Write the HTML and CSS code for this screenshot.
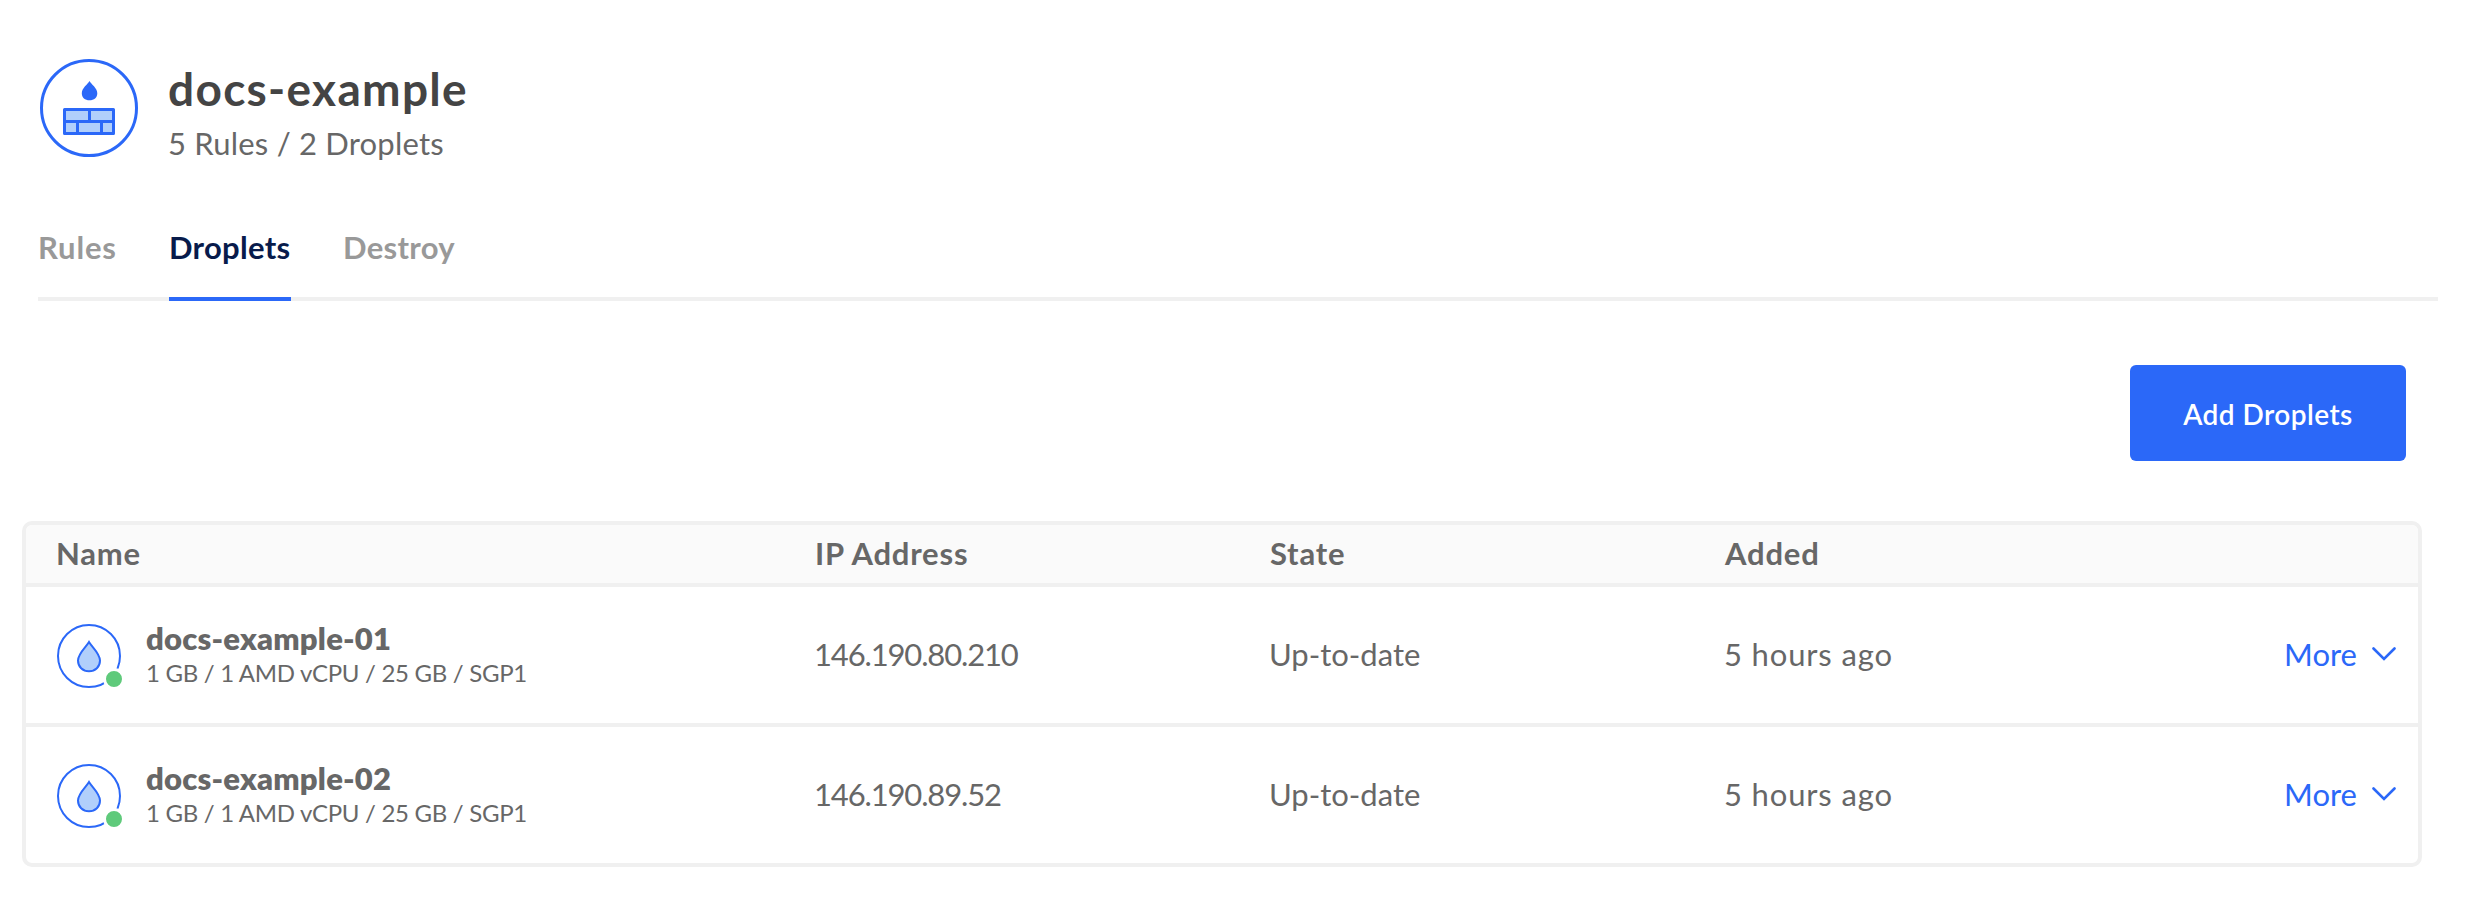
FILE: index.html
```html
<!DOCTYPE html>
<html lang="en">
<head>
<meta charset="utf-8">
<title>docs-example</title>
<link rel="stylesheet" href="styles.css">
</head>
<body>
<header class="header">
  <svg class="header-icon" viewBox="0 0 98 98">
    <circle cx="49" cy="49" r="47.5" fill="#fff" stroke="#2b68f8" stroke-width="3"/>
    <path d="M49.5 22C51.2 25.2 57.3 29 57.3 34.2C57.3 38.6 54 41.2 49.5 41.2C45 41.2 41.8 38.6 41.8 34.2C41.8 29 47.8 25.2 49.5 22Z" fill="#2b68f8"/>
    <path d="M24.5 50.5h49v24h-49zM24.5 62.5h49M49.5 50.5v12M37.5 62.5v12M61.5 62.5v12" fill="#b1cffb" stroke="#2b68f8" stroke-width="3" stroke-linejoin="round"/>
  </svg>
  <div class="header-text">
    <h1 class="title">docs-example</h1>
    <p class="subtitle">5 Rules / 2 Droplets</p>
  </div>
</header>
<nav class="tabs">
  <a class="tab tab-rules">Rules</a>
  <a class="tab tab-droplets active">Droplets</a>
  <a class="tab tab-destroy">Destroy</a>
</nav>
<div class="actions"><button class="button">Add Droplets</button></div>
<section class="table">
  <div class="row head">
    <div>Name</div>
    <div>IP Address</div>
    <div>State</div>
    <div>Added</div>
  </div>
  <div class="row">
    <div class="droplet">
      <svg class="droplet-icon" viewBox="0 0 66 66">
        <circle cx="32" cy="32" r="31" fill="#fff" stroke="#2b68f8" stroke-width="2"/>
        <path d="M32 18C35 23 43 29.5 43 36.5C43 42.8 38.3 47.2 32 47.2C25.7 47.2 21 42.8 21 36.5C21 29.5 29 23 32 18Z" fill="#b1cffb" stroke="#2b68f8" stroke-width="2"/>
        <circle cx="57" cy="55" r="9.5" fill="#5fca7b" stroke="#fff" stroke-width="3"/>
      </svg>
      <div>
        <div class="name">docs-example-01</div>
        <div class="specs">1 GB / 1 AMD vCPU / 25 GB / SGP1</div>
      </div>
    </div>
    <div class="ip">146.190.80.210</div>
    <div>Up-to-date</div>
    <div class="added">5 hours ago</div>
    <a class="more">More<svg class="chevron" viewBox="0 0 24 14"><path d="M1.5 1.5L12 12L22.5 1.5" fill="none" stroke="#2b68f8" stroke-width="2.6" stroke-linecap="round"/></svg></a>
  </div>
  <div class="row">
    <div class="droplet">
      <svg class="droplet-icon" viewBox="0 0 66 66">
        <circle cx="32" cy="32" r="31" fill="#fff" stroke="#2b68f8" stroke-width="2"/>
        <path d="M32 18C35 23 43 29.5 43 36.5C43 42.8 38.3 47.2 32 47.2C25.7 47.2 21 42.8 21 36.5C21 29.5 29 23 32 18Z" fill="#b1cffb" stroke="#2b68f8" stroke-width="2"/>
        <circle cx="57" cy="55" r="9.5" fill="#5fca7b" stroke="#fff" stroke-width="3"/>
      </svg>
      <div>
        <div class="name">docs-example-02</div>
        <div class="specs">1 GB / 1 AMD vCPU / 25 GB / SGP1</div>
      </div>
    </div>
    <div class="ip">146.190.89.52</div>
    <div>Up-to-date</div>
    <div class="added">5 hours ago</div>
    <a class="more">More<svg class="chevron" viewBox="0 0 24 14"><path d="M1.5 1.5L12 12L22.5 1.5" fill="none" stroke="#2b68f8" stroke-width="2.6" stroke-linecap="round"/></svg></a>
  </div>
</section>
</body>
</html>
```
FILE: styles.css
```css
* { box-sizing: border-box; margin: 0; }
body { background: #fff; color: #676767; font: 400 31px/40px Lato, sans-serif; }

.header { display: flex; padding: 59px 0 0 40px; gap: 30px; height: 163px; }
.header-icon { width: 98px; height: 98px; }
.header-text { padding-top: 4px; }
.title { font-size: 46px; line-height: 52px; font-weight: 700; letter-spacing: 1.3px; color: #444; }
.subtitle { margin-top: 8px; letter-spacing: .2px; }

.tabs { display: flex; gap: 52px; width: 2400px; height: 74px; margin: 64px 0 0 38px; box-shadow: inset 0 -4px #f0f0f0; }
.tab { padding-bottom: 30px; font-weight: 700; letter-spacing: .3px; color: #999; border-bottom: 4px solid transparent; }
.tab-rules { width: 79px; letter-spacing: .8px; }
.tab-droplets { width: 122px; }
.active { color: #081b4b; border-color: #2b68f8; }

.actions { display: flex; justify-content: flex-end; padding: 64px 64px 0 0; }
.button { width: 276px; height: 96px; padding: 2px 0 0; border: 0; border-radius: 6px; background: #2b68f8; color: #fff; font: 600 28px/40px Lato, sans-serif; letter-spacing: .45px; }

.table { width: 2400px; margin: 60px 0 0 22px; border: 4px solid #f0f0f0; border-radius: 10px; overflow: hidden; }
.row { display: grid; grid-template-columns: 759px 455px 455px 1fr auto; align-items: center; height: 140px; padding: 0 22px 3px 29px; border-bottom: 4px solid #f0f0f0; }
.row:last-child { height: 136px; border-bottom: 0; }
.head { height: 62px; padding: 0 22px 2px 30px; background: #fafafa; font-weight: 700; letter-spacing: .8px; }

.droplet { display: flex; align-self: start; gap: 23px; padding: 33px 0 0 2px; }
.droplet-icon { width: 66px; height: 66px; margin-top: 4px; }
.name { font-weight: 800; line-height: 36px; letter-spacing: .2px; }
.specs { padding-top: 1px; font-size: 24px; line-height: 32px; letter-spacing: -.3px; }
.ip { letter-spacing: -1.15px; }
.added { letter-spacing: .85px; }
.more { display: flex; align-items: center; gap: 15px; color: #2b68f8; }
.chevron { width: 24px; height: 14px; }
```
